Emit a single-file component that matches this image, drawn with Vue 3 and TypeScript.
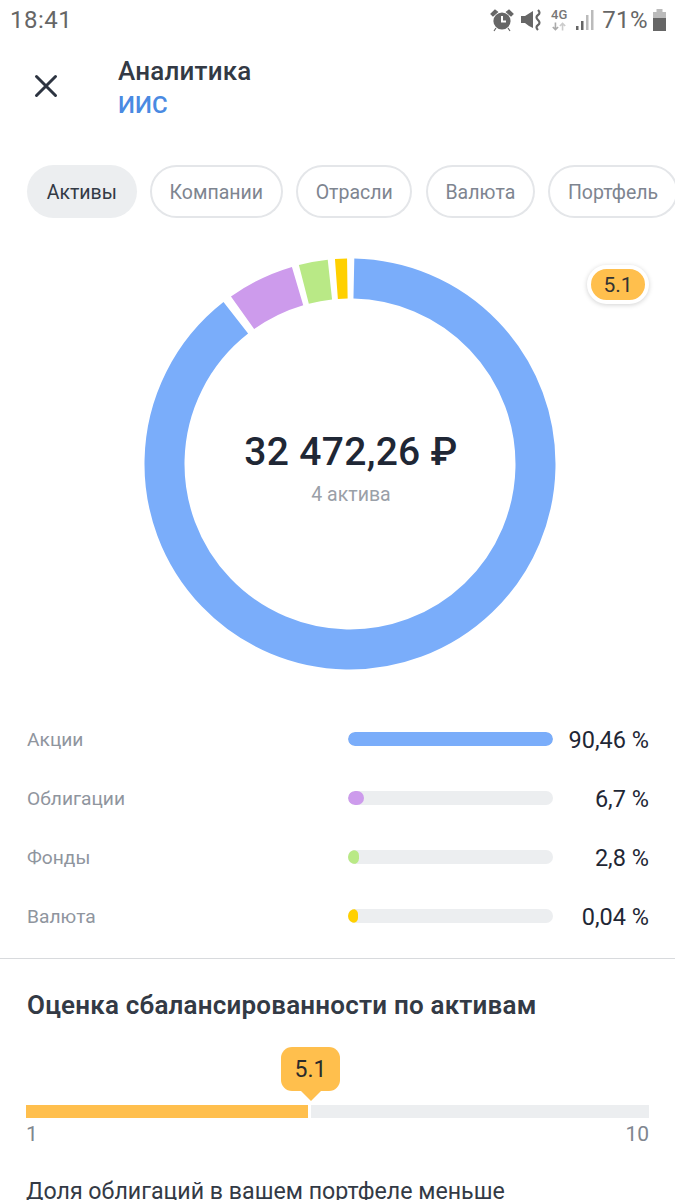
<script setup lang="ts">
interface Asset {
  name: string
  value: string
  color: string
  width: number
}

interface Arc {
  color: string
  from: number
  to: number
}

const chips = ['Активы', 'Компании', 'Отрасли', 'Валюта', 'Портфель']

const assets: Asset[] = [
  { name: 'Акции', value: '90,46 %', color: '#7aadfa', width: 100 },
  { name: 'Облигации', value: '6,7 %', color: '#cd9bec', width: 8 },
  { name: 'Фонды', value: '2,8 %', color: '#b9e986', width: 5.5 },
  { name: 'Валюта', value: '0,04 %', color: '#ffd000', width: 5 },
]

// angles are clockwise from 12 o'clock
const arcs: Arc[] = [
  { color: '#7aadfa', from: 1.2, to: 322 },
  { color: '#cd9bec', from: 324.6, to: 343.6 },
  { color: '#b9e986', from: 345.6, to: 353.8 },
  { color: '#ffd000', from: 355.8, to: 359.2 },
]

function dash(arc: Arc) {
  return `${arc.to - arc.from} ${360 - (arc.to - arc.from)}`
}
</script>

<template>
  <div class="screen">
    <div class="status">
      <span class="time">18:41</span>
      <div class="status-right">
        <svg class="alarm" width="24" height="24" viewBox="0 0 24 24">
          <circle cx="12" cy="13" r="8.6" fill="#666" />
          <path d="M12 8v5.500h4" fill="none" stroke="#fff" stroke-width="2" />
          <path d="M1 6l4-4 2.500 2-4.500 4zM23 6l-4-4-2.500 2 4.500 4zM6 20l-2 3M18 20l2 3" fill="#666" stroke="#666" stroke-width="1.200" />
        </svg>
        <svg width="22" height="24" viewBox="0 0 22 24">
          <path d="M1 8h4l8-5v17l-4-2-4-3H1z" fill="#666" />
          <path d="M18 2q3 3 0 5t0 5 0 5 0 5" fill="none" stroke="#666" stroke-width="2.200" />
        </svg>
        <div class="net">
          <span class="net-label">4G</span>
          <svg width="16" height="11" viewBox="0 0 18 11">
            <path d="M5 1v8M2 6l3 3 3-3" fill="none" stroke="#aaa" stroke-width="1.800" />
            <path d="M13 10V2M10 5l3-3 3 3" fill="none" stroke="#ccc" stroke-width="1.800" />
          </svg>
        </div>
        <svg width="18" height="22" viewBox="0 0 18 22">
          <rect x="0" y="17" width="2.500" height="4" fill="#666" />
          <rect x="5" y="12" width="2.500" height="9" fill="#666" />
          <rect x="10" y="6" width="2.500" height="15" fill="#bbb" />
          <rect x="15" y="1" width="2.500" height="20" fill="#bbb" />
        </svg>
        <span class="percent">71%</span>
        <svg width="15" height="24" viewBox="0 0 15 24">
          <rect x="4.500" y="1" width="6" height="3" fill="#bbb" />
          <rect x="1" y="4" width="13" height="6" fill="#bbb" />
          <rect x="1" y="10" width="13" height="13" fill="#666" />
        </svg>
      </div>
    </div>

    <header class="top">
      <svg class="close" width="24" height="24" viewBox="0 0 24 24">
        <path d="M2.500 2.500l19 19M21.500 2.500l-19 19" stroke="#2d3441" stroke-width="3" stroke-linecap="round" fill="none" />
      </svg>
      <div class="titles">
        <div class="title">Аналитика</div>
        <div class="subtitle">ИИС</div>
      </div>
    </header>

    <div class="chips">
      <span v-for="(chip, i) in chips" :key="chip" class="chip" :class="{ active: i === 0 }">{{ chip }}</span>
    </div>

    <div class="chart">
      <svg class="donut" width="412" height="412" viewBox="0 0 412 412">
        <circle
          v-for="arc in arcs"
          :key="arc.color"
          cx="206"
          cy="206"
          r="185.500"
          fill="none"
          :stroke="arc.color"
          stroke-width="40"
          pathLength="360"
          :stroke-dasharray="dash(arc)"
          :transform="`rotate(${arc.from - 90} 206 206)`"
        />
      </svg>
      <div class="total">
        <div class="amount">32 472,26 ₽</div>
        <div class="count">4 актива</div>
      </div>
      <span class="score-pill">5.1</span>
    </div>

    <div class="legend">
      <div v-for="a in assets" :key="a.name" class="row">
        <span class="name">{{ a.name }}</span>
        <div class="track">
          <div class="fill" :style="{ width: a.width + '%', background: a.color }"></div>
        </div>
        <span class="value">{{ a.value }}</span>
      </div>
    </div>

    <div class="divider"></div>

    <section class="balance">
      <h2 class="heading">Оценка сбалансированности по активам</h2>
      <div class="scale">
        <div class="tip">5.1</div>
        <div class="scale-bar">
          <div class="scale-done"></div>
          <div class="scale-rest"></div>
        </div>
        <div class="scale-ends">
          <span>1</span>
          <span>10</span>
        </div>
      </div>
      <p class="note">Доля облигаций в вашем портфеле меньше</p>
    </section>
  </div>
</template>

<style>
html,
body {
  margin: 0;
  background: #fff;
  overflow: hidden;
}
</style>

<style scoped>
.screen {
  width: 675px;
  height: 1200px;
  overflow: hidden;
  background: #fff;
  font-family: Roboto, 'Noto Sans', sans-serif;
  color: #1f2735;
}
.status {
  height: 40px;
  display: flex;
  align-items: center;
  justify-content: space-between;
  padding: 0 8px 0 10px;
  color: #666;
}
.time {
  font-size: 24px;
  letter-spacing: 0.5px;
}
.status-right {
  display: flex;
  align-items: center;
  gap: 8px;
}
.alarm {
  margin-right: -2px;
}
.net {
  display: flex;
  flex-direction: column;
  align-items: center;
  width: 16px;
  margin: 0 1px;
}
.net-label {
  font-size: 13px;
  line-height: 13px;
  font-weight: 500;
  color: #777;
}
.percent {
  font-size: 24px;
  letter-spacing: 0.4px;
  color: #666;
  margin-right: -4px;
}
.top {
  display: flex;
  align-items: center;
  height: 72px;
  margin-top: 12px;
  padding-left: 34px;
}
.close {
  flex: none;
  margin-top: -5px;
}
.titles {
  margin-left: 60px;
}
.title {
  font-size: 26px;
  line-height: 34px;
  letter-spacing: 0.2px;
  font-weight: 500;
  color: #333a45;
}
.subtitle {
  font-size: 24px;
  line-height: 34px;
  font-weight: 500;
  color: #4a8ae2;
}
.chips {
  display: flex;
  gap: 13.300px;
  margin-top: 41px;
  padding-left: 27px;
  white-space: nowrap;
}
.chip {
  flex: none;
  box-sizing: border-box;
  height: 53px;
  line-height: 56px;
  padding: 0 19.700px;
  border-radius: 27px;
  box-shadow: inset 0 0 0 2px #e4e6e9;
  font-size: 19.500px;
  color: #7e8590;
}
.chip.active {
  background: #eceef0;
  box-shadow: none;
  color: #333a45;
}
.chart {
  position: relative;
  height: 412px;
  margin-top: 40px;
  padding-left: 144px;
}
.donut {
  display: block;
}
.total {
  position: absolute;
  left: 145px;
  top: 170px;
  width: 412px;
  text-align: center;
}
.amount {
  font-size: 39px;
  line-height: 48px;
  font-weight: 500;
  letter-spacing: 0.3px;
  color: #1f2735;
}
.count {
  margin-top: 7px;
  font-size: 19.500px;
  line-height: 24px;
  color: #9aa0a8;
}
.score-pill {
  position: absolute;
  left: 587px;
  top: 7px;
  box-sizing: border-box;
  width: 62px;
  height: 39px;
  line-height: 33px;
  text-align: center;
  background: #ffbf4d;
  border: 4px solid #fff;
  border-radius: 20px;
  box-shadow: 0 1px 5px rgba(0, 0, 0, 0.18);
  font-size: 21px;
  color: #333;
}
.legend {
  display: flex;
  flex-direction: column;
  gap: 29px;
  margin-top: 54px;
  padding: 0 26px 0 27px;
}
.row {
  display: flex;
  align-items: center;
  height: 30px;
}
.name {
  width: 321px;
  font-size: 19.200px;
  color: #8f959e;
}
.track {
  width: 205px;
  height: 14px;
  border-radius: 7px;
  background: #eceef0;
  overflow: hidden;
}
.fill {
  height: 100%;
  border-radius: 7px;
}
.value {
  flex: 1;
  padding-top: 2px;
  text-align: right;
  font-size: 23.500px;
  color: #1f2735;
}
.divider {
  height: 1px;
  margin-top: 27px;
  background: #d8dadd;
}
.balance {
  padding: 0 26px;
}
.heading {
  margin: 31px 0 0;
  padding-left: 1px;
  font-size: 26px;
  line-height: 30px;
  letter-spacing: 0.2px;
  font-weight: 600;
  color: #333a45;
}
.scale {
  position: relative;
  margin-top: 85px;
}
.scale-bar {
  display: flex;
  gap: 3px;
  height: 13px;
}
.scale-done {
  width: 282px;
  background: #ffbf4d;
}
.scale-rest {
  flex: 1;
  background: #eceef0;
}
.tip {
  position: absolute;
  left: 255px;
  top: -58px;
  width: 59px;
  height: 44px;
  line-height: 46px;
  text-align: center;
  border-radius: 11px;
  background: #ffbf4d;
  font-size: 23px;
  color: #2b2b2b;
}
.tip::after {
  content: '';
  position: absolute;
  left: 20px;
  top: 44px;
  border-left: 10px solid transparent;
  border-right: 10px solid transparent;
  border-top: 10px solid #ffbf4d;
}
.scale-ends {
  display: flex;
  justify-content: space-between;
  margin-top: 2px;
  font-size: 21px;
  line-height: 28px;
  color: #80868f;
}
.note {
  margin: 28px 0 0;
  font-size: 23.200px;
  line-height: 30px;
  color: #333a45;
}
</style>
